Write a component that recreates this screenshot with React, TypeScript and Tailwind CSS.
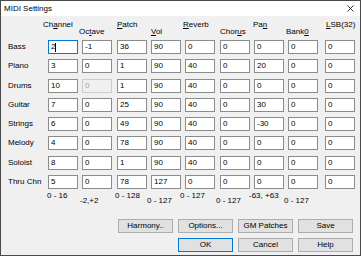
import React from "react";

type Head = { pre: string; u: string; post: string; cls: string };

const heads: Head[] = [
  { pre: "Ch", u: "a", post: "nnel", cls: "mt-[4px] -ml-[5px]" },
  { pre: "Oc", u: "t", post: "ave", cls: "mt-[11px] -ml-[3px]" },
  { pre: "", u: "P", post: "atch", cls: "mt-[4px] ml-0" },
  { pre: "", u: "V", post: "ol", cls: "mt-[11px] ml-0" },
  { pre: "", u: "R", post: "everb", cls: "mt-[4px] -ml-[2px]" },
  { pre: "Chor", u: "u", post: "s", cls: "mt-[11px] ml-0" },
  { pre: "Pa", u: "n", post: "", cls: "mt-[4px] -ml-[1px]" },
  { pre: "Bank", u: "0", post: "", cls: "mt-[11px] -ml-[2px]" },
  { pre: "", u: "L", post: "SB(32)", cls: "mt-[4px] ml-[1px]" },
];

const ranges: { t: string; cls: string }[] = [
  { t: "0 - 16", cls: "mt-[2px] -ml-[1px]" },
  { t: "-2,+2", cls: "mt-[7px] -ml-[2px]" },
  { t: "0 - 128", cls: "mt-[2px] -ml-[2px]" },
  { t: "0 - 127", cls: "mt-[7px] -ml-[4px]" },
  { t: "0 - 127", cls: "mt-[2px] -ml-[5px]" },
  { t: "0 - 127", cls: "mt-[7px] -ml-[4px]" },
  { t: "-63, +63", cls: "mt-[2px] -ml-[5px]" },
  { t: "0 - 127", cls: "mt-[7px] -ml-[4px]" },
  { t: "", cls: "" },
];

const rows: string[][] = [
  ["Bass", "2", "-1", "36", "90", "0", "0", "0", "0", "0"],
  ["Piano", "3", "0", "1", "90", "40", "0", "20", "0", "0"],
  ["Drums", "10", "0", "1", "90", "40", "0", "0", "0", "0"],
  ["Guitar", "7", "0", "25", "90", "40", "0", "30", "0", "0"],
  ["Strings", "6", "0", "49", "90", "40", "0", "-30", "0", "0"],
  ["Melody", "4", "0", "78", "90", "40", "0", "0", "0", "0"],
  ["Soloist", "8", "0", "1", "90", "40", "0", "0", "0", "0"],
  ["Thru Chn", "5", "0", "78", "127", "0", "0", "0", "0", "0"],
];

function Box({ v, focus, disabled }: { v: string; focus?: boolean; disabled?: boolean }) {
  if (disabled) {
    return (
      <div className="w-[30px] h-[14px] border border-[#cccccc] bg-[#f0f0f0] text-[#a0a0a0] pl-[2px] flex items-center leading-none">
        {v}
      </div>
    );
  }
  if (focus) {
    return (
      <div className="w-[30px] h-[14px] border border-[#0078d7] bg-white text-black pl-[2px] flex items-center leading-none">
        {v}
        <span className="w-px h-[9px] bg-black"></span>
      </div>
    );
  }
  return (
    <div className="w-[30px] h-[14px] border border-[#8c8c8c] bg-white text-black pl-[2px] flex items-center leading-none">
      {v}
    </div>
  );
}

function Btn({ label, def }: { label: string; def?: boolean }) {
  return (
    <div
      className={
        def
          ? "h-[14px] border border-[#0078d7] bg-[#e1e1e1] flex items-center justify-center leading-none"
          : "h-[14px] border border-[#adadad] bg-[#e1e1e1] flex items-center justify-center leading-none"
      }
    >
      {label}
    </div>
  );
}

export default function App() {
  return (
    <div className="w-[361px] h-[256px] border border-[#4a4a4a] bg-[#f0f0f0] flex flex-col font-['Liberation_Sans',Arial,sans-serif] text-[8px] text-black">
      <div className="h-[15px] bg-white flex items-center justify-between pl-[3px] pr-[5px] shrink-0">
        <span className="text-[8px] leading-none">MIDI Settings</span>
        <svg width="7" height="7" viewBox="0 0 7 7" className="mr-[1px]">
          <path d="M0.5 0.5 L6.5 6.5 M6.5 0.5 L0.5 6.5" stroke="#000" strokeWidth="0.8" fill="none" />
        </svg>
      </div>

      <div className="grid grid-cols-[47px_34px_35px_34px_34px_35px_34px_34px_37px_30px]">
        <div className="h-[24px]"></div>
        {heads.map((h, i) => (
          <div key={"h" + i} className="h-[24px] whitespace-nowrap">
            <div className={"leading-[10px] " + h.cls}>
              {h.pre}
              <span className="underline underline-offset-[1px]">{h.u}</span>
              {h.post}
            </div>
          </div>
        ))}

        {rows.map((r, ri) => {
          const last = ri === rows.length - 1;
          return (
            <React.Fragment key={"r" + ri}>
              <div className={last ? "h-[14px] flex items-center pl-[7px] whitespace-nowrap leading-none" : "h-[19.3px] pb-[5.3px] flex items-center pl-[7px] whitespace-nowrap leading-none"}>
                {r[0]}
              </div>
              {r.slice(1).map((v, ci) => (
                <div key={ci} className={last ? "h-[14px]" : "h-[19.3px]"}>
                  <Box v={v} focus={ri === 0 && ci === 0} disabled={ri === 2 && ci === 1} />
                </div>
              ))}
            </React.Fragment>
          );
        })}

        <div className="h-[20px]"></div>
        {ranges.map((g, i) => (
          <div key={"g" + i} className="h-[20px] whitespace-nowrap">
            <div className={"leading-[10px] " + g.cls}>{g.t}</div>
          </div>
        ))}
      </div>

      <div className="mt-auto pr-[7px] pb-[3px] flex justify-end">
        <div className="grid grid-cols-[55px_55px_55px_55px] gap-x-[5px] gap-y-[5px]">
          <Btn label="Harmony.." />
          <Btn label="Options..." />
          <Btn label="GM Patches" />
          <Btn label="Save" />
          <div></div>
          <Btn label="OK" def />
          <Btn label="Cancel" />
          <Btn label="Help" />
        </div>
      </div>
    </div>
  );
}
